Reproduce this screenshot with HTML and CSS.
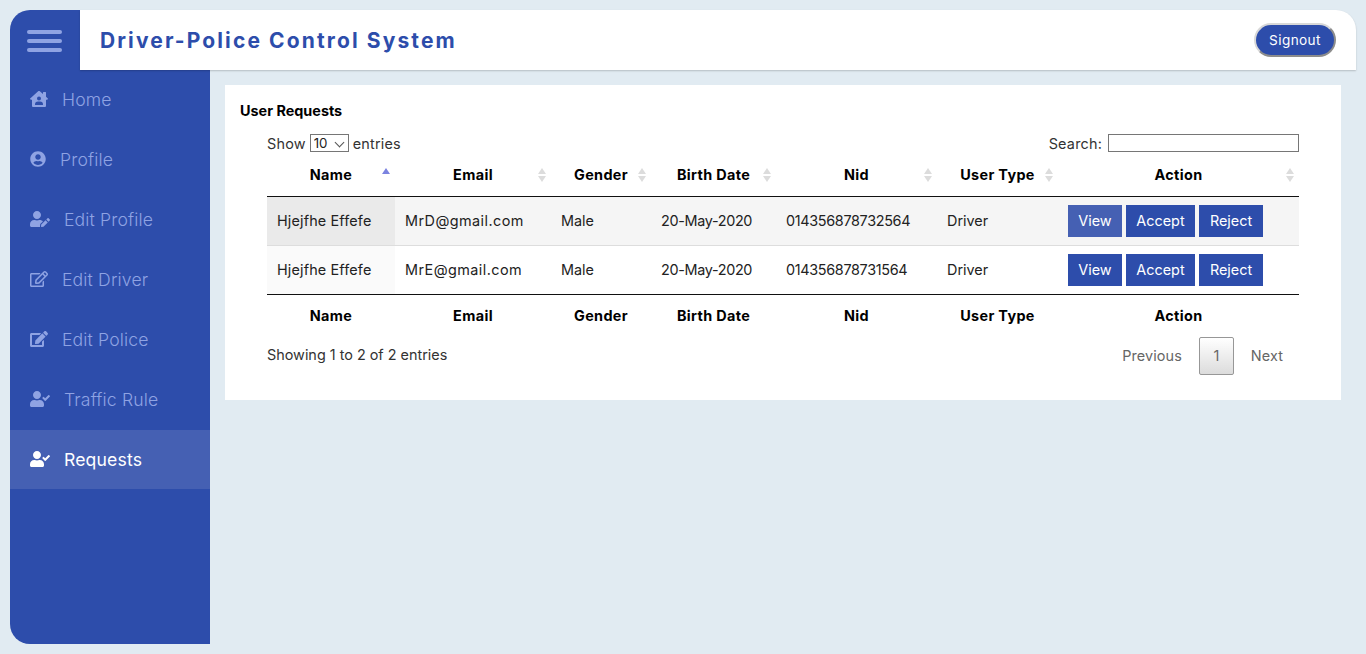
FILE: index.html
```html
<!DOCTYPE html>
<html lang="en">
<head>
    <meta charset="UTF-8">
    <meta name="viewport" content="width=device-width, initial-scale=1.0">
    <title>Driver-Police Control System</title>
    <link rel="stylesheet" href="styles.css">
</head>
<body>

<svg class="icon-defs" aria-hidden="true">
    <symbol id="i-home" viewBox="0 0 576 512"><path d="M570.69,236.27,512,184.44V48a16,16,0,0,0-16-16H432a16,16,0,0,0-16,16V99.67L314.78,10.3C308.5,4.61,296.53,0,288,0s-20.46,4.61-26.74,10.3l-256,226A18.27,18.27,0,0,0,0,248.2a18.64,18.64,0,0,0,4.09,10.71L25.5,282.7a21.14,21.14,0,0,0,12,5.3,21.67,21.67,0,0,0,10.69-4.11l15.9-14V480a32,32,0,0,0,32,32H480a32,32,0,0,0,32-32V269.88l15.91,14A21.94,21.94,0,0,0,538.63,288a20.89,20.89,0,0,0,11.87-5.31l21.41-23.81A21.64,21.64,0,0,0,576,248.19,21,21,0,0,0,570.69,236.27ZM288,176a64,64,0,1,1-64,64A64,64,0,0,1,288,176ZM400,448H176a16,16,0,0,1-16-16,96,96,0,0,1,96-96h64a96,96,0,0,1,96,96A16,16,0,0,1,400,448Z"/></symbol>
    <symbol id="i-profile" viewBox="0 0 496 512"><path d="M248 8C111 8 0 119 0 256s111 248 248 248 248-111 248-248S385 8 248 8zm0 96c48.6 0 88 39.4 88 88s-39.4 88-88 88-88-39.4-88-88 39.4-88 88-88zm0 344c-58.7 0-111.3-26.6-146.5-68.2 18.8-35.4 55.6-59.8 98.5-59.8 2.4 0 4.8.4 7.1 1.1 13 4.2 26.6 6.9 40.9 6.9 14.3 0 28-2.7 40.9-6.9 2.3-.7 4.7-1.1 7.1-1.1 42.9 0 79.7 24.4 98.5 59.8C359.3 421.4 306.7 448 248 448z"/></symbol>
    <symbol id="i-user-edit" viewBox="0 0 640 512"><path d="M224 256c70.7 0 128-57.3 128-128S294.7 0 224 0 96 57.3 96 128s57.3 128 128 128zm89.6 32h-16.7c-22.2 10.2-46.9 16-72.9 16s-50.6-5.8-72.9-16h-16.7C60.2 288 0 348.2 0 422.4V464c0 26.5 21.5 48 48 48h274.9c-2.4-6.8-3.4-14-2.6-21.3l6.8-60.9 1.2-11.1 7.9-7.9 77.3-77.3c-24.5-27.7-60-45.5-99.9-45.5zm45.3 145.3l-6.8 61c-1.1 10.2 7.5 18.8 17.6 17.6l60.9-6.8 137.9-137.9-71.7-71.7-137.9 137.8zM633 268.9L595.1 231c-9.3-9.3-24.5-9.3-33.8 0l-37.8 37.8-4.1 4.1 71.8 71.7 41.8-41.8c9.3-9.4 9.3-24.5 0-33.9z"/></symbol>
    <symbol id="i-edit-line" viewBox="0 0 576 512"><path d="M402.3 344.9l32-32c5-5 13.7-1.5 13.7 5.7V464c0 26.5-21.5 48-48 48H48c-26.5 0-48-21.5-48-48V112c0-26.5 21.5-48 48-48h273.5c7.1 0 10.7 8.6 5.7 13.7l-32 32c-1.5 1.5-3.5 2.3-5.7 2.3H48v352h352V350.5c0-2.1.8-4.1 2.3-5.6zm156.6-201.8L296.3 405.7l-90.4 10c-26.2 2.9-48.5-19.2-45.6-45.6l10-90.4L432.9 17.1c22.9-22.9 59.9-22.9 82.7 0l43.2 43.2c22.9 22.9 22.9 60 .1 82.8zM460.1 174L402 115.9 216.2 301.8l-7.3 65.3 65.3-7.3L460.1 174zm64.8-79.7l-43.2-43.2c-4.1-4.1-10.8-4.1-14.8 0L436 82l58.1 58.1 30.9-30.9c4-4.2 4-10.8-.1-14.9z"/></symbol>
    <symbol id="i-edit" viewBox="0 0 576 512"><path d="M402.6 83.2l90.2 90.2c3.8 3.8 3.8 10 0 13.8L274.4 405.6l-92.8 10.3c-12.4 1.4-22.9-9.1-21.5-21.5l10.3-92.8L388.8 83.2c3.8-3.8 10-3.8 13.8 0zm162-22.9l-48.8-48.8c-15.2-15.2-39.9-15.2-55.2 0l-35.4 35.4c-3.8 3.8-3.8 10 0 13.8l90.2 90.2c3.8 3.8 10 3.8 13.8 0l35.4-35.4c15.2-15.3 15.2-40 0-55.2zM384 346.2V448H64V128h229.8c3.2 0 6.2-1.3 8.5-3.5l40-40c7.6-7.6 2.2-20.5-8.5-20.5H48C21.5 64 0 85.5 0 112v352c0 26.5 21.5 48 48 48h352c26.5 0 48-21.5 48-48V306.2c0-10.7-12.9-16-20.5-8.5l-40 40c-2.2 2.3-3.5 5.3-3.5 8.5z"/></symbol>
    <symbol id="i-user-check" viewBox="0 0 640 512"><path d="M224 256c70.7 0 128-57.3 128-128S294.7 0 224 0 96 57.3 96 128s57.3 128 128 128zm89.6 32h-16.7c-22.2 10.2-46.9 16-72.9 16s-50.6-5.8-72.9-16h-16.7C60.2 288 0 348.2 0 422.4V464c0 26.5 21.5 48 48 48h352c26.5 0 48-21.5 48-48v-41.6c0-74.2-60.2-134.4-134.4-134.4zm323-128.4l-27.8-28.1c-4.6-4.7-12.1-4.7-16.8-.1l-104.8 104-45.5-45.8c-4.6-4.7-12.1-4.7-16.8-.1l-28.1 27.9c-4.7 4.6-4.7 12.1-.1 16.8l81.7 82.3c4.6 4.7 12.1 4.7 16.8.1l141.3-140.2c4.6-4.7 4.7-12.2.1-16.8z"/></symbol>
</svg>

<div id="app">
    <header class="topbar">
        <div class="toggle"><span></span><span></span><span></span></div>
        <div class="topbar-main">
            <h1 class="brand">Driver-Police Control System</h1>
            <button class="signout">Signout</button>
        </div>
    </header>

    <div class="body-row">
        <nav class="sidebar">
            <a class="nav-item"><svg class="nav-icon icon-home"><use href="#i-home"/></svg><span class="nav-label gap-home">Home</span></a>
            <a class="nav-item"><svg class="nav-icon icon-profile"><use href="#i-profile"/></svg><span class="nav-label gap-profile">Profile</span></a>
            <a class="nav-item"><svg class="nav-icon icon-wide"><use href="#i-user-edit"/></svg><span class="nav-label gap-wide">Edit Profile</span></a>
            <a class="nav-item"><svg class="nav-icon icon-home"><use href="#i-edit-line"/></svg><span class="nav-label gap-home">Edit Driver</span></a>
            <a class="nav-item"><svg class="nav-icon icon-home"><use href="#i-edit"/></svg><span class="nav-label gap-home">Edit Police</span></a>
            <a class="nav-item"><svg class="nav-icon icon-wide"><use href="#i-user-check"/></svg><span class="nav-label gap-wide">Traffic Rule</span></a>
            <a class="nav-item active"><svg class="nav-icon icon-wide"><use href="#i-user-check"/></svg><span class="nav-label gap-wide">Requests</span></a>
        </nav>

        <main class="content">
            <section class="panel">
                <h2 class="panel-title">User Requests</h2>
                <div class="table-wrap">
                    <div class="table-controls">
                        <label class="control">Show
                            <span class="select-box"><select class="length-select"><option>10</option><option>25</option><option>50</option></select></span>
                            entries</label>
                        <label class="control">Search: <input type="search" class="search-input"></label>
                    </div>

                    <table class="data-table">
                        <colgroup>
                            <col class="c-name"><col class="c-email"><col class="c-gender"><col class="c-birth"><col class="c-nid"><col class="c-type"><col class="c-action">
                        </colgroup>
                        <thead>
                            <tr>
                                <th class="sort-asc">Name</th>
                                <th>Email</th>
                                <th>Gender</th>
                                <th>Birth Date</th>
                                <th>Nid</th>
                                <th>User Type</th>
                                <th>Action</th>
                            </tr>
                        </thead>
                        <tbody>
                            <tr class="odd">
                                <td class="sorted">Hjejfhe Effefe</td>
                                <td class="cell-email">MrD@gmail.com</td>
                                <td>Male</td>
                                <td class="cell-num">20-May-2020</td>
                                <td class="cell-num">014356878732564</td>
                                <td>Driver</td>
                                <td class="actions"><button class="btn btn-view hover">View</button><button class="btn btn-accept">Accept</button><button class="btn btn-reject">Reject</button></td>
                            </tr>
                            <tr class="even">
                                <td class="sorted">Hjejfhe Effefe</td>
                                <td class="cell-email">MrE@gmail.com</td>
                                <td>Male</td>
                                <td class="cell-num">20-May-2020</td>
                                <td class="cell-num">014356878731564</td>
                                <td>Driver</td>
                                <td class="actions"><button class="btn btn-view">View</button><button class="btn btn-accept">Accept</button><button class="btn btn-reject">Reject</button></td>
                            </tr>
                        </tbody>
                        <tfoot>
                            <tr>
                                <th>Name</th>
                                <th>Email</th>
                                <th>Gender</th>
                                <th>Birth Date</th>
                                <th>Nid</th>
                                <th>User Type</th>
                                <th>Action</th>
                            </tr>
                        </tfoot>
                    </table>

                    <div class="table-bottom">
                        <div class="info">Showing 1 to 2 of 2 entries</div>
                        <div class="paging">
                            <a class="page-link">Previous</a>
                            <a class="page-current">1</a>
                            <a class="page-link">Next</a>
                        </div>
                    </div>
                </div>
            </section>
        </main>
    </div>
</div>

</body>
</html>
```

FILE: styles.css
```css
* {
    box-sizing: border-box;
}

html, body {
    height: 100%;
}

body {
    margin: 0;
    padding: 10px;
    overflow: hidden;
    background-color: #e1ebf2;
    font-family: Inter, "Open Sans", sans-serif;
    font-size: 14.4px;
    color: #222;
}

.icon-defs {
    display: none;
}

#app {
    display: flex;
    flex-direction: column;
    height: 634px;
}

/* top bar */
.topbar {
    display: flex;
    height: 60px;
    flex: none;
    position: relative;
    z-index: 1;
}

.toggle {
    width: 70px;
    padding: 20px 18px 0 17px;
    background-color: #2d4dab;
    border-top-left-radius: 20px;
}

.toggle span {
    display: block;
    height: 4px;
    margin-bottom: 5px;
    border-radius: 2px;
    background-color: #8fa3e3;
}

.topbar-main {
    flex: 1;
    display: flex;
    align-items: center;
    justify-content: space-between;
    padding: 0 20px;
    background-color: #fff;
    border-top-right-radius: 20px;
    box-shadow: 0 1px 2px rgba(0, 0, 0, 0.2);
}

.brand {
    margin: 0;
    font-size: 21px;
    font-weight: 700;
    letter-spacing: 2.12px;
    color: #2d4dab;
}

.signout {
    width: 82px;
    height: 34px;
    padding: 0;
    border: 2px solid;
    border-color: #d8d8d8 #8c8c8c #8c8c8c #d8d8d8;
    border-radius: 17px;
    background-color: #2d4dab;
    color: #fff;
    font-family: inherit;
    font-size: 13.6px;
    letter-spacing: 0.4px;
}

/* sidebar */
.body-row {
    flex: 1;
    display: flex;
    min-height: 0;
}

.sidebar {
    width: 200px;
    flex: none;
    background-color: #2d4dab;
    border-bottom-left-radius: 20px;
}

.nav-item {
    display: flex;
    align-items: center;
    height: 59px;
    margin-bottom: 1px;
    padding: 0 0 1px 20px;
    color: #8fa3e3;
    font-size: 17.6px;
    font-weight: 300;
    letter-spacing: 0.15px;
}

.nav-item.active {
    background-color: #4560b3;
    color: #fff;
    font-weight: 400;
}

.nav-icon {
    height: 16px;
    fill: currentColor;
    flex: none;
}

.icon-home {
    width: 18px;
}

.icon-profile {
    width: 16px;
}

.icon-wide {
    width: 20px;
}

.gap-home {
    margin-left: 14px;
}

.gap-profile {
    margin-left: 14px;
}

.gap-wide {
    margin-left: 14px;
}

/* main */
.content {
    flex: 1;
    padding: 15px;
}

.panel {
    height: 315px;
    padding: 17px 42px 0 15px;
    background-color: #fff;
}

.panel-title {
    margin: 0 0 14px;
    font-size: 14.4px;
    line-height: 17px;
    font-weight: 700;
    color: #000;
}

.table-wrap {
    margin-left: 27px;
}

.table-controls {
    display: flex;
    justify-content: space-between;
    align-items: center;
    height: 20px;
    color: #333;
}

.control {
    display: flex;
    align-items: center;
    gap: 4px;
    letter-spacing: 0.2px;
}

.select-box {
    position: relative;
    display: block;
    width: 39px;
    height: 18px;
}

/* chevron over the select */
.select-box::after {
    content: "";
    position: absolute;
    top: 5px;
    right: 6px;
    width: 6px;
    height: 6px;
    border-right: 1px solid #555;
    border-bottom: 1px solid #555;
    transform: rotate(45deg);
    pointer-events: none;
}

.length-select {
    display: block;
    width: 100%;
    height: 100%;
    padding: 0 0 0 3px;
    border: 1px solid #767676;
    border-radius: 0;
    background-color: #fff;
    color: #222;
    appearance: none;
    font-family: inherit;
    font-size: 13.3px;
}

.search-input {
    width: 191px;
    height: 18px;
    margin-left: 2px;
    padding: 0 2px;
    border: 1px solid #767676;
    appearance: none;
}

.data-table {
    width: 100%;
    margin-top: 6px;
    border-collapse: collapse;
    table-layout: fixed;
}

.c-name { width: 128px; }
.c-email { width: 156px; }
.c-gender { width: 100px; }
.c-birth { width: 125px; }
.c-nid { width: 161px; }
.c-type { width: 121px; }

.data-table th {
    position: relative;
    height: 42px;
    font-weight: 700;
    letter-spacing: 0.35px;
    color: #000;
    padding: 0;
}

.data-table thead th {
    height: 37px;
    padding-bottom: 6px;
    border-bottom: 1px solid #111;
}

/* sort arrows */
.data-table thead th::before,
.data-table thead th::after {
    content: "";
    position: absolute;
    right: 5px;
    border-left: 4.5px solid transparent;
    border-right: 4.5px solid transparent;
}

.data-table thead th::before {
    top: 9px;
    border-bottom: 6px solid #dcdcdc;
}

.data-table thead th::after {
    top: 17px;
    border-top: 6px solid #dcdcdc;
}

.data-table thead th.sort-asc::before {
    border-bottom-color: #7b83e0;
}

.data-table thead th.sort-asc::after {
    display: none;
}

.data-table td {
    height: 49px;
    padding: 0 10px;
    white-space: nowrap;
}

.sorted {
    letter-spacing: 0.15px;
}

.cell-email {
    letter-spacing: 0.45px;
}

.cell-num {
    letter-spacing: -0.33px;
}

.odd td {
    background-color: #f5f5f5;
    border-bottom: 1px solid #ddd;
}

.odd td.sorted {
    background-color: #eaeaea;
}

.even td {
    border-bottom: 1px solid #111;
}

.even td.sorted {
    background-color: #fafafa;
}

.actions {
    font-size: 0;
}

.btn {
    height: 32px;
    margin-right: 4px;
    padding: 0;
    border: none;
    background-color: #2d4dab;
    color: #fff;
    font-family: inherit;
    font-size: 14.4px;
}

.btn-view { width: 54px; }
.btn-accept { width: 69px; }
.btn-reject { width: 64px; }

.btn.hover {
    background-color: #4560b3;
}

.table-bottom {
    display: flex;
    justify-content: space-between;
    align-items: flex-start;
    margin-top: 1px;
}

.info {
    padding-top: 9px;
    color: #333;
}

.paging {
    display: flex;
    align-items: center;
    padding-right: 1px;
}

.page-link {
    padding: 0 15px 1px;
    color: #666;
    letter-spacing: 0.1px;
}

.page-current {
    width: 35px;
    height: 38px;
    line-height: 36px;
    margin: 0 2px;
    text-align: center;
    border: 1px solid #979797;
    border-radius: 2px;
    background: linear-gradient(to bottom, #fff 0%, #dcdcdc 100%);
    color: #666;
}
```
